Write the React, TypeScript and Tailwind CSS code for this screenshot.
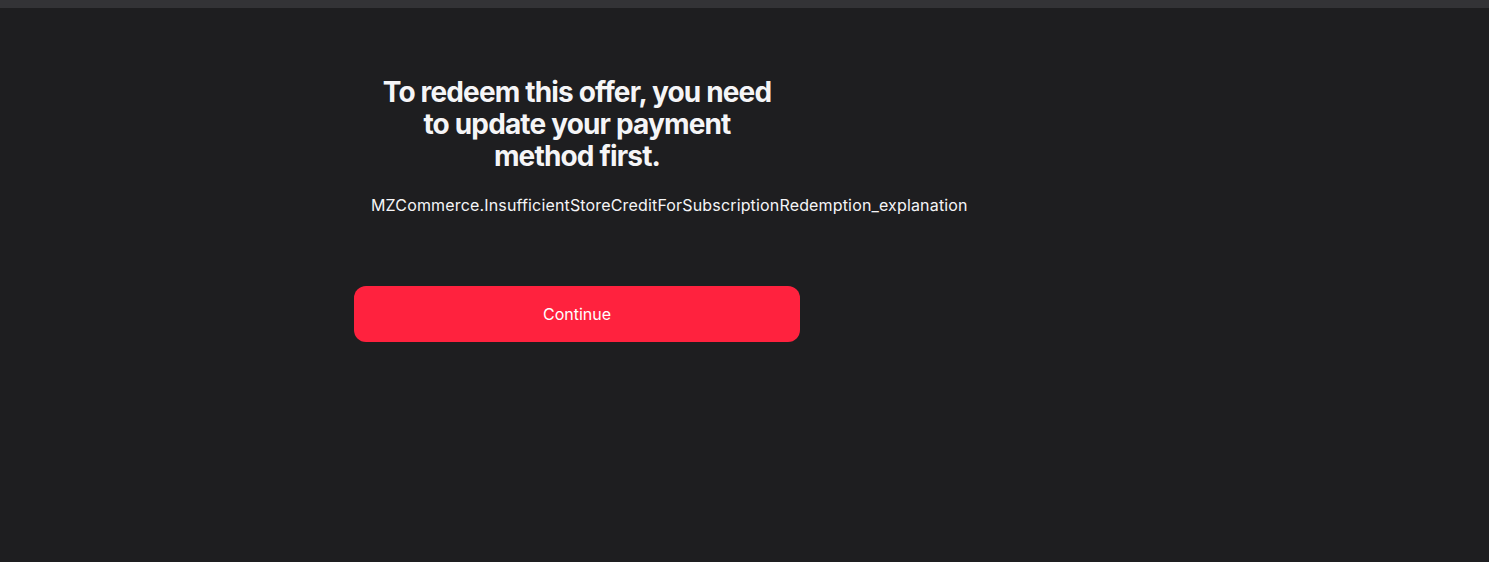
export default function App() {
  return (
    <div className="min-h-[562px] bg-[#1e1e20] font-['Inter',sans-serif] text-white">
      <div className="h-2 bg-[#333336]" />
      <div className="w-[446px] ml-[354px] pt-[68px]">
        <div className="px-[17px] text-center">
          <h1 className="text-[28px] leading-[32px] font-bold tracking-[-0.03em] text-[#f5f5f7]">
            To redeem this offer, you need to update your payment method first.
          </h1>
          <p className="mt-[23px] text-[16px] leading-[20px] text-[#f5f5f7] tracking-[0.01em]">
            MZCommerce.InsufficientStoreCreditForSubscriptionRedemption_explanation
          </p>
        </div>
        <button className="mt-[71px] h-14 w-full rounded-xl bg-[#ff223e] text-[16px] text-white">
          Continue
        </button>
      </div>
    </div>
  );
}
